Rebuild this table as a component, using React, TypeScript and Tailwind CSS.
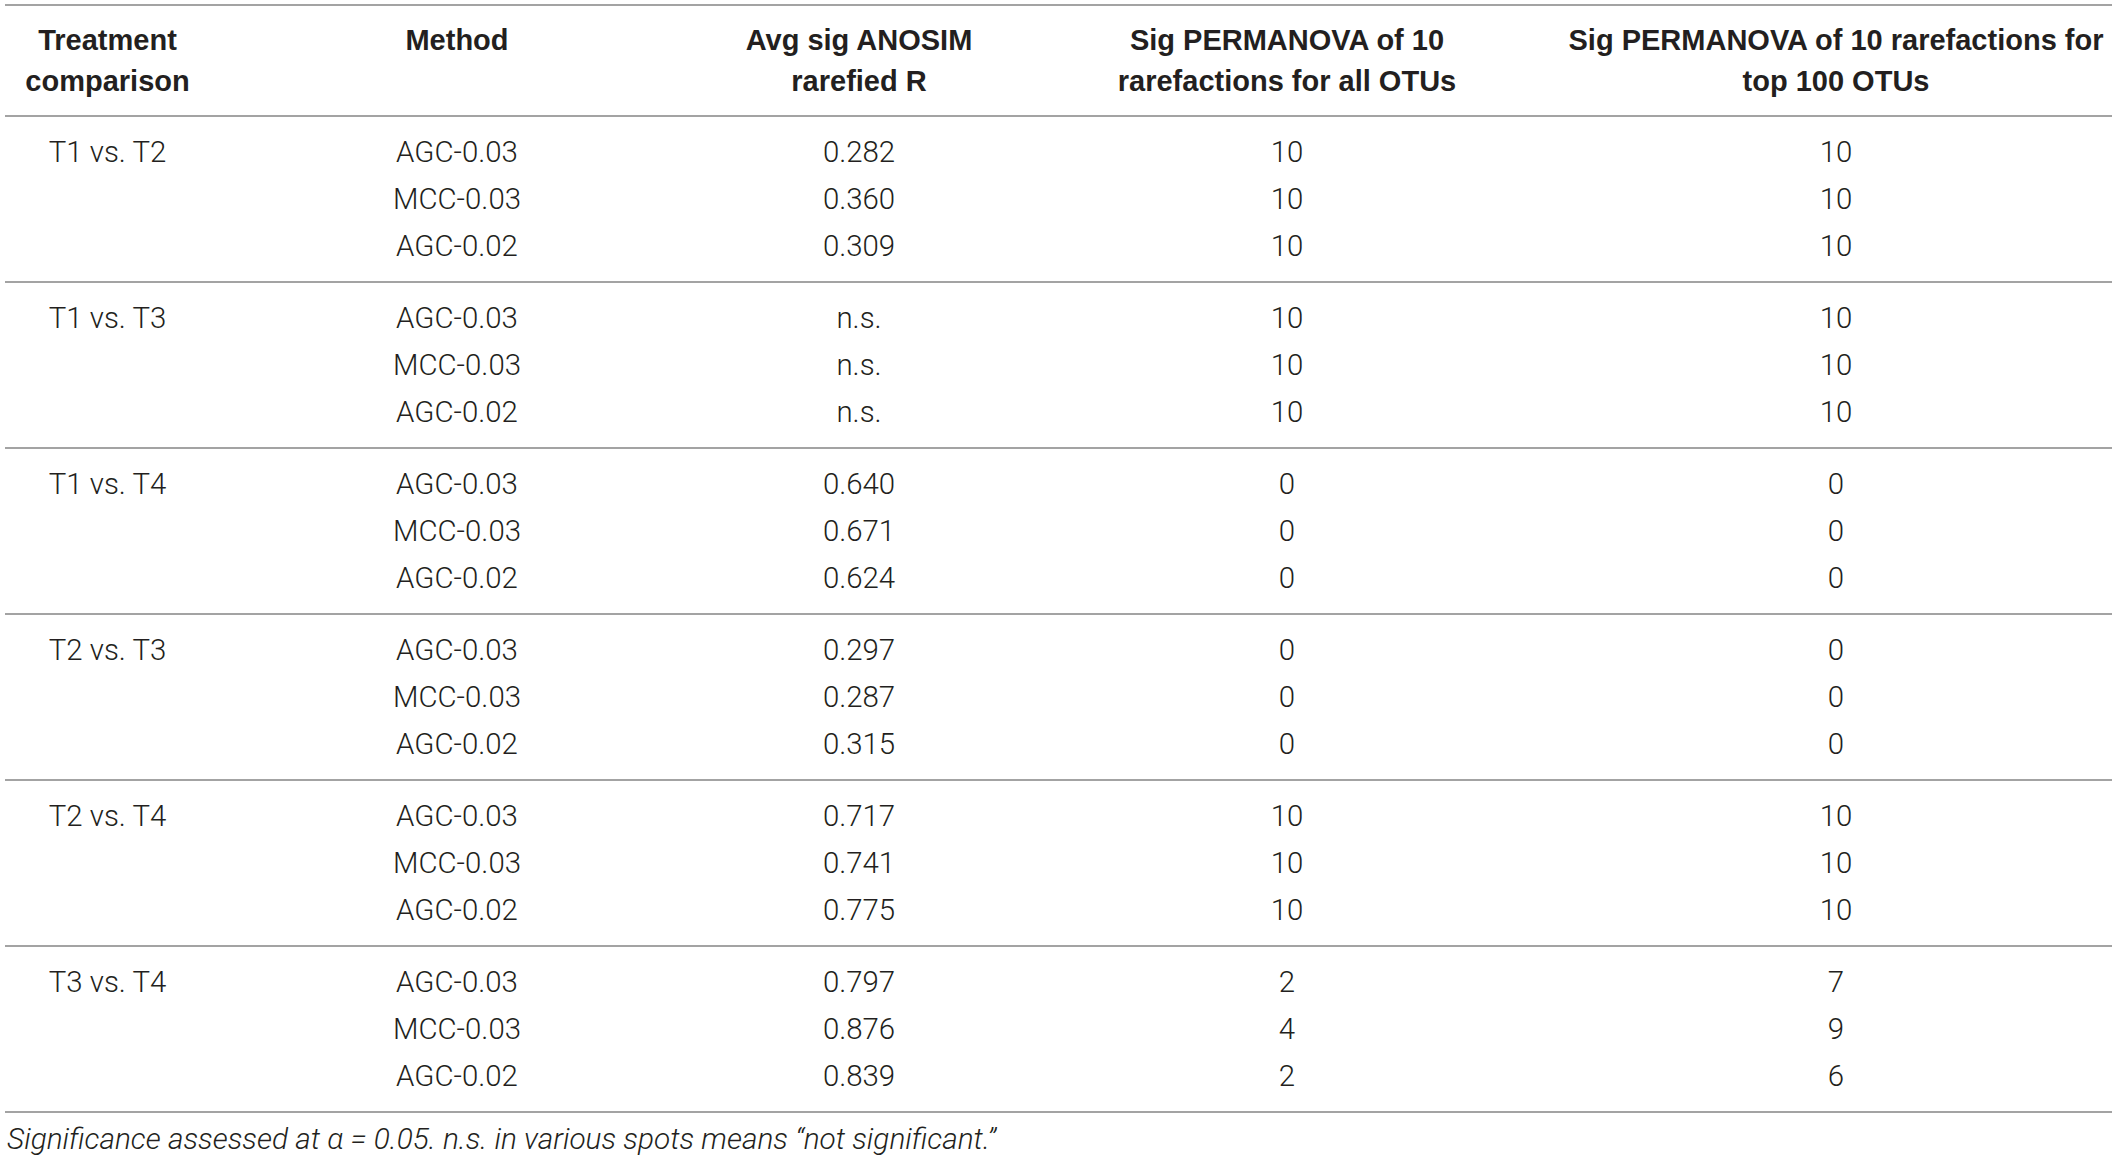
import React from "react";

type Group = { label: string; rows: [string, string, string, string][] };

const groups: Group[] = [
  {
    label: "T1 vs. T2",
    rows: [
      ["AGC-0.03", "0.282", "10", "10"],
      ["MCC-0.03", "0.360", "10", "10"],
      ["AGC-0.02", "0.309", "10", "10"],
    ],
  },
  {
    label: "T1 vs. T3",
    rows: [
      ["AGC-0.03", "n.s.", "10", "10"],
      ["MCC-0.03", "n.s.", "10", "10"],
      ["AGC-0.02", "n.s.", "10", "10"],
    ],
  },
  {
    label: "T1 vs. T4",
    rows: [
      ["AGC-0.03", "0.640", "0", "0"],
      ["MCC-0.03", "0.671", "0", "0"],
      ["AGC-0.02", "0.624", "0", "0"],
    ],
  },
  {
    label: "T2 vs. T3",
    rows: [
      ["AGC-0.03", "0.297", "0", "0"],
      ["MCC-0.03", "0.287", "0", "0"],
      ["AGC-0.02", "0.315", "0", "0"],
    ],
  },
  {
    label: "T2 vs. T4",
    rows: [
      ["AGC-0.03", "0.717", "10", "10"],
      ["MCC-0.03", "0.741", "10", "10"],
      ["AGC-0.02", "0.775", "10", "10"],
    ],
  },
  {
    label: "T3 vs. T4",
    rows: [
      ["AGC-0.03", "0.797", "2", "7"],
      ["MCC-0.03", "0.876", "4", "9"],
      ["AGC-0.02", "0.839", "2", "6"],
    ],
  },
];

const gridCols = "grid grid-cols-[205px_494px_310px_546px_552px]";

export default function App() {
  return (
    <div
      className="w-[2117px] h-[1160px] bg-white overflow-hidden"
      style={{ fontFamily: '"Liberation Sans", Arial, sans-serif' }}
    >
      <div className="ml-[5px] mt-[4px] w-[2107px]">
        <div
          className={`${gridCols} border-t-2 border-b-2 border-[#a3a3a3] pt-[14px] pb-[13px] text-[29px] leading-[41px] font-bold text-[#231f20] text-center whitespace-nowrap`}
        >
          <div>
            Treatment
            <br />
            comparison
          </div>
          <div>Method</div>
          <div>
            Avg sig ANOSIM
            <br />
            rarefied R
          </div>
          <div>
            Sig PERMANOVA of 10
            <br />
            rarefactions for all OTUs
          </div>
          <div>
            Sig PERMANOVA of 10 rarefactions for
            <br />
            top 100 OTUs
          </div>
        </div>
        {groups.map((g) => (
          <div
            key={g.label}
            className={`${gridCols} border-b-2 border-[#a3a3a3] pt-[12px] pb-[11px] text-[29.4px] leading-[47px] font-light text-[#231f20] text-center whitespace-nowrap font-[Roboto,'Liberation_Sans',sans-serif]`}
          >
            <div>{g.label}</div>
            {[0, 1, 2, 3].map((c) => (
              <div key={c} className="flex flex-col">
                {g.rows.map((r, i) => (
                  <div key={i}>{r[c]}</div>
                ))}
              </div>
            ))}
          </div>
        ))}
        <div className="mt-[10px] text-[29.8px] leading-[32px] italic font-light text-[#231f20] pl-[2px] font-[Roboto,'Liberation_Sans',sans-serif]">
          Significance assessed at α = 0.05. n.s. in various spots means “not significant.”
        </div>
      </div>
    </div>
  );
}
